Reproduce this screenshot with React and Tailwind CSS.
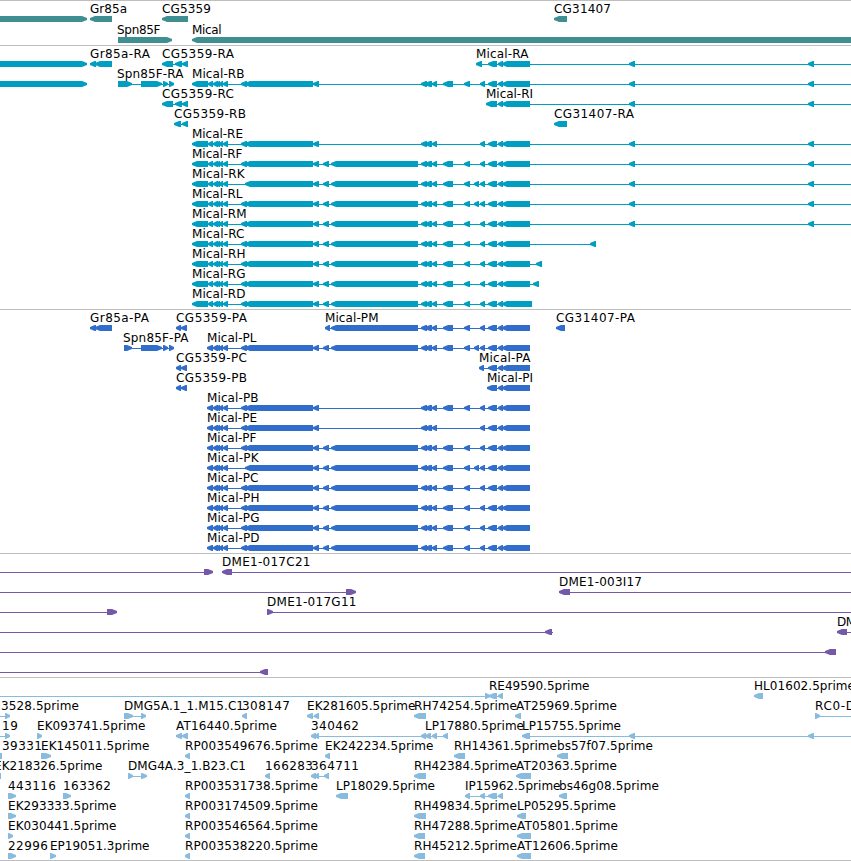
import React from "react";

const WIDTH = 851;

// Horizontal advance of each character in the label font
const ADVANCES = {
  ".": 4, "-": 7, _: 6, A: 8, B: 8, C: 8, D: 9, E: 6.5, F: 6, G: 9, H: 9, I: 2.5,
  K: 8, L: 6, M: 10, P: 7, R: 8, S: 6.5, T: 7, a: 7, b: 8, c: 7, e: 7, f: 4,
  g: 8, i: 3, l: 2.5, m: 11, n: 7, p: 8, r: 5, s: 6,
};

const textWidth = (text) =>
  text.split("").reduce((sum, ch) => sum + (ADVANCES[ch] || 8), 0);

const left = (label, x, exons, line) => ({ label, x, exons, line, dir: "left" });
const right = (label, x, exons, line) => ({ label, x, exons, line, dir: "right" });

// Exons shared by the Mical transcripts
const utr = [[192, 208], [208, 213]];
const tail = [[213, 218], [216, 220], [219, 223], [223, 228]];
const big = [[245, 313], [313, 319]];
const second = [[323, 329], [331, 418]];
const trio = [[421, 427], [425, 432], [432, 437]];
const mid = [[443, 453], [464, 470]];
const head = [[488, 497], [498, 503], [502, 530]];
const far = [[629, 635], [808, 814]];

const full = [...tail, [241, 247], ...big, ...second, ...trio, ...mid, [480, 485], ...head];
const withExtra = [...tail, [241, 247], ...big, ...second, ...trio, ...mid, [474, 479], [480, 485], ...head];
const joined = [...tail, ...big, ...second, ...trio, ...mid, [474, 479], [480, 485], ...head];
const skipSecond = [...tail, [241, 247], ...big, ...trio, ...mid, [480, 485], ...head];
const skipMid = [...tail, [241, 247], ...big, ...trio, [480, 485], ...head];

const rna = (name, exons, extra = far, end = WIDTH) =>
  left(name, 192, [...utr, ...exons, ...extra], [192, end]);
const protein = (name, exons) =>
  left(name, 207, [[207, 213], ...exons], [207, 530]);
const rp = (name) => left(name, 185, [[185, 190]]);

const genes = [
  [
    right("", 0, [[-10, 87]]),
    left("Gr85a", 90, [[90, 112]]),
    left("CG5359", 162, [[162, 188]]),
    left("CG31407", 554, [[554, 567]]),
  ],
  [
    right("Spn85F", 117, [[118, 172]]),
    left("Mical", 192, [[192, 870]]),
  ],
];

const transcripts = [
  [
    right("", 0, [[-10, 87]]),
    left("Gr85a-RA", 90, [[90, 96], [95, 112]]),
    left("CG5359-RA", 162, [[162, 173], [175, 182], [182, 188]], [162, 188]),
    left("Mical-RA", 476, [[476, 482], ...head, ...far], [476, WIDTH]),
  ],
  [
    right("", 0, [[-10, 87]]),
    right("Spn85F-RA", 117, [[118, 132], [141, 162], [163, 168], [169, 174]], [118, 174]),
    rna("Mical-RB", skipSecond),
  ],
  [
    left("CG5359-RC", 162, [[162, 173], [175, 182], [182, 188]], [162, 188]),
    left("Mical-RI", 486, [[486, 497], ...head.slice(1), ...far], [486, WIDTH]),
  ],
  [
    left("CG5359-RB", 174, [[174, 181], [182, 188]], [174, 188]),
    left("CG31407-RA", 554, [[554, 567]]),
  ],
  [rna("Mical-RE", skipMid)],
  [rna("Mical-RF", full)],
  [rna("Mical-RK", joined)],
  [rna("Mical-RL", withExtra)],
  [rna("Mical-RM", full)],
  [rna("Mical-RC", full, [[590, 596]], 596)],
  [rna("Mical-RH", full, [[536, 542]], 542)],
  [rna("Mical-RG", full, [[533, 539]], 539)],
  [rna("Mical-RD", [...full.slice(0, -1), [502, 532]], [], 532)],
];

const proteins = [
  [
    left("Gr85a-PA", 90, [[90, 96], [95, 112]]),
    left("CG5359-PA", 176, [[176, 181], [181, 187]], [176, 187]),
    left("Mical-PM", 325, [[325, 330], [331, 418], ...trio, ...mid, [480, 485], ...head], [325, 530]),
    left("CG31407-PA", 556, [[556, 565]]),
  ],
  [
    right("Spn85F-PA", 123, [[124, 132], [141, 162], [163, 168], [169, 174]], [124, 174]),
    protein("Mical-PL", withExtra),
  ],
  [
    left("CG5359-PC", 176, [[176, 181], [181, 187]], [176, 187]),
    left("Mical-PA", 479, [[479, 484], ...head], [479, 530]),
  ],
  [
    left("CG5359-PB", 176, [[176, 181], [181, 187]], [176, 187]),
    left("Mical-PI", 487, [[487, 497], ...head.slice(1)], [487, 530]),
  ],
  [protein("Mical-PB", skipSecond)],
  [protein("Mical-PE", skipMid)],
  [protein("Mical-PF", full)],
  [protein("Mical-PK", joined)],
  [protein("Mical-PC", full)],
  [protein("Mical-PH", full)],
  [protein("Mical-PG", full)],
  [protein("Mical-PD", full)],
];

const clones = [
  [
    right("", 0, [[204, 213]], [-1, 213]),
    left("DME1-017C21", 222, [[222, 232]], [222, WIDTH]),
  ],
  [
    right("", 0, [[346, 356]], [-1, 356]),
    left("DME1-003I17", 559, [[559, 570]], [559, WIDTH]),
  ],
  [
    right("", 0, [[107, 117]], [-1, 117]),
    right("DME1-017G11", 267, [[267, 273]], [267, WIDTH]),
  ],
  [
    left("", 0, [[545, 552]], [-1, 553]),
    left("DM", 837, [[837, 847]], [837, WIDTH]),
  ],
  [left("", 0, [[825, 836]], [-1, 836])],
  [left("", 0, [[260, 268]], [-1, 268])],
];

const ests = [
  [
    right("", 0, [[485, 490]], [-1, 490]),
    left("RE49590.5prime", 489, [[489, 497], [498, 503]], [489, 503]),
    left("HL01602.5prime", 754, [[754, 763]]),
  ],
  [
    right("3528.5prime", 1, [[5, 10]], [-1, 10]),
    right("DMG5A.1_1.M15.C1", 124, [[124, 133], [141, 146]], [124, 146]),
    left("308147", 242, [[242, 247]]),
    left("EK281605.5prime", 307, [[307, 313], [314, 319]], [307, 319]),
    left("RH74254.5prime", 414, [[414, 426]]),
    left("AT25969.5prime", 516, [[515, 521]]),
    right("RC0-D", 815, [[815, 820]], [815, WIDTH]),
  ],
  [
    right("19", 2, [[5, 10]], [-1, 10]),
    right("EK093741.5prime", 37, [[37, 42]]),
    left("AT16440.5prime", 176, [[176, 182], [182, 188]]),
    left("340462", 311, [[311, 316], [315, 319]]),
    left("LP17880.5prime", 425, [[421, 426], [425, 431], [432, 437], [443, 448]], [311, 448]),
    left("LP15755.5prime", 522, [[522, 530], ...far], [522, WIDTH]),
  ],
  [
    left("39331", 2, [[-8, 2]]),
    right("EK145011.5prime", 41, [[41, 51]]),
    rp("RP003549676.5prime"),
    left("EK242234.5prime", 325, [[325, 330]]),
    left("RH14361.5prime", 454, [[454, 465]]),
    left("bs57f07.5prime", 557, [[557, 568]]),
  ],
  [
    left("EK218326.5prime", -6, [[-8, 1]]),
    right("DMG4A.3_1.B23.C1", 128, [[128, 133], [141, 147]], [128, 147]),
    left("166283", 265, [[265, 270]]),
    left("364711", 311, [[311, 316], [315, 319], [324, 329]], [311, 329]),
    left("RH42384.5prime", 414, [[414, 426]]),
    left("AT20363.5prime", 516, [[516, 531]]),
  ],
  [
    right("443116", 8, [[8, 16]]),
    right("163362", 63, [[63, 71]]),
    rp("RP003531738.5prime"),
    left("LP18029.5prime", 336, [[336, 348]]),
    left("IP15962.5prime", 465, [[465, 470], [480, 485], [488, 497], [498, 503]], [465, 503]),
    left("bs46g08.5prime", 559, [[559, 567]]),
  ],
  [
    right("EK293333.5prime", 8, [[8, 16]]),
    rp("RP003174509.5prime"),
    left("RH49834.5prime", 414, [[414, 426]]),
    left("LP05295.5prime", 517, [[517, 526]]),
  ],
  [
    right("EK030441.5prime", 8, [[8, 13]]),
    rp("RP003546564.5prime"),
    left("RH47288.5prime", 414, [[414, 425]]),
    left("AT05801.5prime", 517, [[517, 531]]),
  ],
  [
    right("22996", 8, [[8, 16]]),
    right("EP19051.3prime", 50, [[50, 56]]),
    rp("RP003538220.5prime"),
    left("RH45212.5prime", 414, [[414, 425]]),
    left("AT12606.5prime", 517, [[517, 531]]),
  ],
];

// Box with a blunt arrow head on the side that dir names
function Exon({ start, end, dir, y }) {
  const size = Math.min(5, (end - start) * 0.8);
  const tip = dir === "left" ? start : end;
  const neck = dir === "left" ? start + size : end - size;
  const back = dir === "left" ? end : start;
  return (
    <polygon
      points={`${tip},${y + 2} ${neck},${y} ${back},${y} ${back},${y + 6} ${neck},${y + 6} ${tip},${y + 4}`}
    />
  );
}

function Feature({ feature, y }) {
  const { label, x, exons, line, dir } = feature;
  return (
    <g>
      {line && <rect x={line[0] + 1} y={y + 3} width={line[1] - line[0] - 1} height="1" />}
      {exons.map(([start, end]) => (
        <Exon key={start} start={start} end={end} dir={dir} y={y} />
      ))}
      {label && (
        <text x={x} y={y - 3} textLength={textWidth(label)} className="fill-black">
          {label}
        </text>
      )}
    </g>
  );
}

function Track({ rows, className, tall }) {
  const height = tall ? 21 : 20;
  return (
    <section className={`border-t border-[#bebebe] pt-0.5 ${className}`}>
      {rows.map((features, i) => (
        <svg key={i} width={WIDTH} height={height} className="block overflow-visible fill-current text-[12px]">
          {features.map((feature, j) => (
            <Feature key={j} feature={feature} y={13} />
          ))}
        </svg>
      ))}
    </section>
  );
}

function App() {
  return (
    <main className="w-[851px] h-[861px] overflow-hidden bg-white border-b border-[#bebebe] font-['DejaVu_Sans',sans-serif]">
      <Track rows={genes} tall className="text-[#3f8e92]" />
      <Track rows={transcripts} className="pb-px text-[#009ec0]" />
      <Track rows={proteins} className="pb-px text-[#316dcb]" />
      <Track rows={clones} className="pb-px text-[#7558a8]" />
      <Track rows={ests} className="text-[#88bbdd]" />
    </main>
  );
}

export default App;
